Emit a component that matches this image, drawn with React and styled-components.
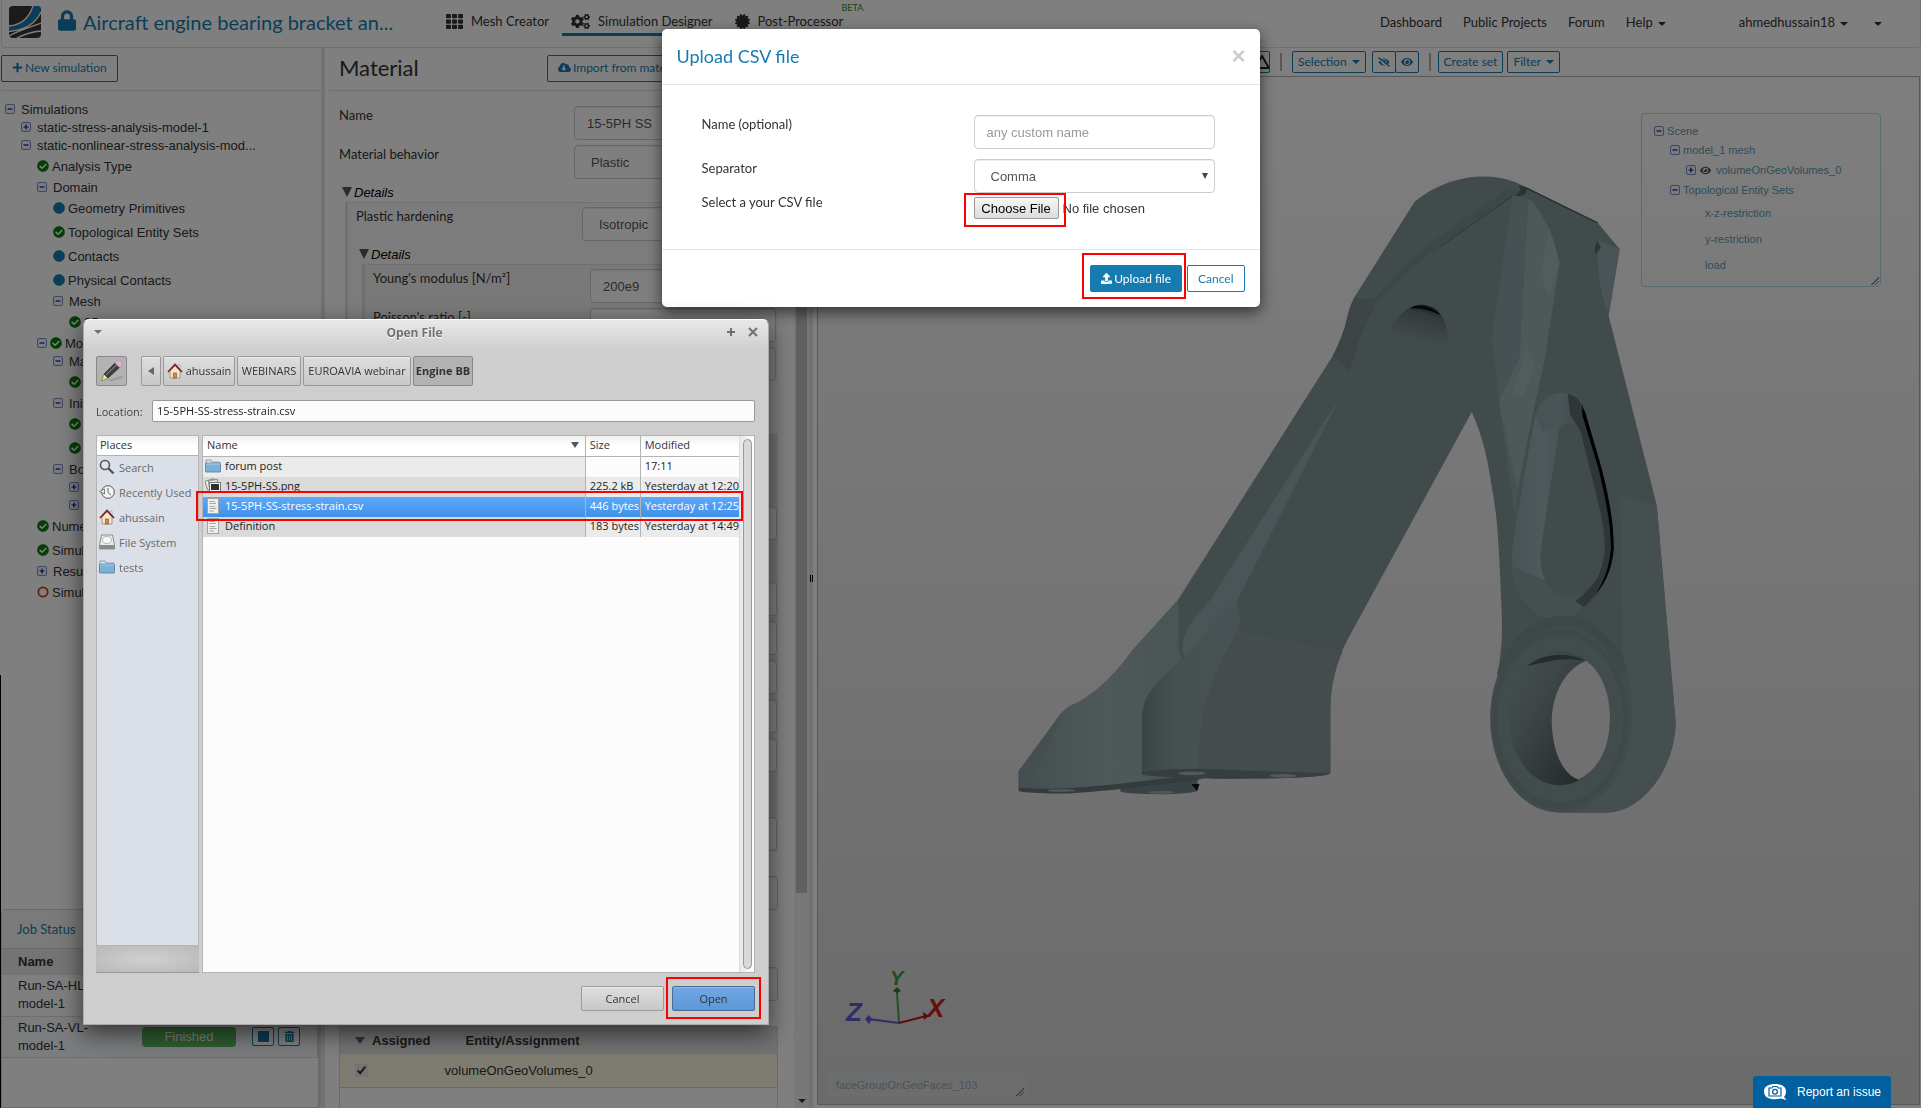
import React, {useState} from "react";
import styled, {createGlobalStyle, css} from "styled-components";
import {
    FaCertificate, FaCheckCircle, FaCircle, FaCloudDownloadAlt, FaCogs,
    FaEye, FaEyeSlash, FaLock, FaPlus, FaTh, FaTrashAlt, FaUpload
} from "react-icons/fa";

const blue = "#167bb0"
const textMain = "#333"
const lato = `Lato, "Open Sans", sans-serif`
const arial = `"Liberation Sans", Arial, sans-serif`
const system = `"Open Sans", "Noto Sans", sans-serif`

const GlobalStyle = createGlobalStyle`
  * { box-sizing: border-box; }
  body { margin: 0; background: #fff; color: ${textMain}; font-family: ${arial}; font-size: 13px; overflow: hidden; }
  button, input, select { font-family: inherit; font-size: inherit; margin: 0; }
  h1, h2, h3 { margin: 0; font-weight: 400; }
`

/* ---------- page ---------- */

const Page = styled.div`
  min-height: 100vh;
  display: flex;
  flex-direction: column;
  padding-left: 1px;
  background: linear-gradient(#fff, #fff) 1px 0 no-repeat, linear-gradient(#fff 675px, #000 675px);
`
const Header = styled.header`
  height: 48px;
  display: flex;
  align-items: flex-start;
  border: 1px solid #e0e0e0;
  border-top: none;
  border-radius: 0 0 4px 4px;
  padding: 0 38px 0 7px;
  font-family: ${lato};
  flex: none;
`
const Brand = styled.a`
  display: flex;
  align-items: center;
  width: 428px;
  padding-top: 4px;
  color: ${blue};
  text-decoration: none;
  font-size: 20px;
  line-height: 36px;
  white-space: nowrap;
`
const LogoSvg = styled.svg`
  width: 32px;
  height: 32px;
  margin-right: 17px;
`
const LockIcon = styled(FaLock)`
  width: 18px;
  height: 21px;
  margin: 0 7px 4px 0;
`
const NavTab = styled.a`
  position: relative;
  height: 36px;
  display: flex;
  align-items: center;
  gap: 8px;
  padding: 9px 9px 0;
  margin-right: 4px;
  color: ${textMain};
  text-decoration: none;
  font-size: 13px;
  white-space: nowrap;
  border-bottom: 3px solid ${p => p.$active ? blue : "transparent"};
`
const Beta = styled.span`
  position: absolute;
  left: 116px;
  top: 2px;
  color: #2e8b2e;
  font-size: 9px;
  line-height: 12px;
`
const UserNav = styled.nav`
  display: flex;
  margin-left: auto;
  gap: 21px;
  line-height: 44px;
  font-size: 13px;
`
const UserLink = styled.a`
  color: ${textMain};
  text-decoration: none;
  margin-left: ${p => p.$gap || 0}px;
`
const Caret = styled.span`
  display: inline-block;
  margin-left: 5px;
  vertical-align: middle;
  border: 4px solid transparent;
  border-top-color: currentColor;
  border-bottom: 0;
`
const Columns = styled.div`
  flex: 1;
  display: flex;
  min-height: 0;
`
const Splitter = styled.div`
  flex: none;
  width: 4px;
  background: #e4e4e4;
  display: flex;
  align-items: center;
  justify-content: center;
  gap: 1px;
`
const Grip = styled.i`
  width: 1px;
  height: 7px;
  background: #000;
`
const OutlineButton = styled.button`
  height: ${p => p.$small ? 22 : 27}px;
  display: flex;
  align-items: center;
  gap: ${p => p.$small ? 0 : 2}px;
  padding: 0 ${p => p.$small ? 5 : 10}px 1px;
  border: 1px solid ${blue};
  border-radius: 2px;
  background: ${p => p.$filled ? blue : "#fff"};
  color: ${p => p.$filled ? "#fff" : blue};
  font-family: ${lato};
  font-size: 12px;
  white-space: nowrap;
`

/* ---------- left column ---------- */

const Sidebar = styled.aside`
  flex: none;
  width: 320px;
  display: flex;
  flex-direction: column;
`
const PanelBar = styled.div`
  height: 43px;
  display: flex;
  align-items: center;
  padding-bottom: 2px;
  border-bottom: 1px solid #e0e0e0;
`
const Tree = styled.ul`
  list-style: none;
  margin: 0;
  padding: 9px 0 0;
  flex: 1;
`
const TreeRow = styled.li`
  height: ${p => p.$leaf ? 24 : 18}px;
  display: flex;
  align-items: center;
  gap: 3px;
  padding-left: ${p => 4 + p.$level * 16}px;
  white-space: nowrap;
`
const Toggle = styled.button`
  width: 10px;
  height: 10px;
  flex: none;
  display: flex;
  margin-right: ${p => p.$tight ? 0 : 3}px;
  padding: 0;
  background: #f4f6fa;
  border: 1px solid #7b8cc0;
  border-radius: 2px;
  color: #1010a0;

  svg { width: 8px; height: 8px; }
`
const StatusIcon = styled.span`
  display: flex;
  width: 12px;
  color: ${p => ({done: "#0b7d0b", open: blue, wait: "#c0451c"})[p.$state]};

  svg { width: 12px; height: 12px; }
`
const Jobs = styled.section`
  height: 199px;
  margin-bottom: 1px;
  border: 1px solid #d4d4d4;
  border-right-width: 3px;
  border-radius: 4px;
`
const JobsTitle = styled.h3`
  height: 39px;
  padding-left: 15px;
  line-height: 38px;
  background: #f5f5f5;
  border-bottom: 1px solid #d4d4d4;
  color: ${blue};
  font-family: ${lato};
  font-size: 13px;
`
const JobsTable = styled.table`
  width: 100%;
  border-collapse: collapse;
  border-right: 1px solid #d4d4d4;
  line-height: 18px;

  th { height: 26px; background: #e8e8e8; text-align: left; padding: 0 0 0 16px; }
  td { height: 41px; padding: 0 0 0 16px; border-bottom: 1px solid #dcdcdc; }
  tr:nth-child(2) td { background: #f6f8fc; }
`
const JobState = styled.span`
  display: block;
  width: 94px;
  line-height: 20px;
  text-align: center;
  border-radius: 4px;
  background: #5cb85c;
  color: #fff;
`
const JobActions = styled.div`
  display: flex;
  gap: 4px;
`
const SquareButton = styled.button`
  width: 22px;
  height: 19px;
  padding: 0;
  display: flex;
  align-items: center;
  justify-content: center;
  background: #fff;
  border: 1px solid ${blue};
  border-radius: 2px;
  color: ${blue};
`

/* ---------- material form ---------- */

const FormPanel = styled.main`
  flex: none;
  width: 484px;
  display: flex;
`
const FormScroll = styled.div`
  flex: 1;
  padding-left: 4px;
`
const FormTitle = styled.h2`
  padding-left: 10px;
  font-family: ${lato};
  font-size: 22px;
  line-height: 24px;
`
const ImportButton = styled(OutlineButton)`
  width: 232px;
  margin: 0 15px 0 auto;
`
const FormBody = styled.div`
  padding: 15px 16px 0 10px;
`
const Field = styled.label`
  display: flex;
  justify-content: space-between;
  height: 34px;
  margin-bottom: ${p => p.$after || 5}px;
  font-family: ${lato};
  line-height: 19px;
`
const boxed = css`
  height: 34px;
  padding: 0 12px;
  border: 1px solid #ccc;
  border-radius: 4px;
  background: #fff;
  color: #555;
  font-family: ${arial};
  font-size: 13px;
  box-shadow: inset 0 1px 1px rgba(0, 0, 0, .07);
`
const TextBox = styled.input`
  ${boxed}
  width: ${p => p.$w}px;

  &::placeholder { color: #999; }
`
const SelectBox = styled.select`
  ${boxed}
  width: ${p => p.$w}px;
  padding: 0 16px;
  appearance: none;
`
const DetailsTitle = styled.div`
  display: flex;
  align-items: center;
  gap: 2px;
  height: 18px;
  padding: 0 0 2px 3px;
  color: #000;
  font-style: italic;

  &::before { content: ""; border: 5px solid transparent; border-top: 10px solid #555; border-bottom: 0; }
`
const DetailsBody = styled.div`
  margin: 0 0 0 6px;
  padding: 4px 1px 0 8px;
  border-left: 3px solid #e0e0e0;
  border-top: 1px solid #e0e0e0;
  background: ${p => p.$shade || "#f9f9f9"};
`
const SectionHead = styled.div`
  height: 67px;
`
const AssignTable = styled.table`
  width: 439px;
  margin-top: 25px;
  border: 1px solid #d4d4d4;
  border-collapse: collapse;
  font-size: 13px;
  white-space: nowrap;

  th { height: 27px; background: #e4e4e4; text-align: left; padding: 0 0 0 15px; }
  th + th { padding-left: 35px; }
  td { height: 34px; background: #fcf8e3; padding: 0 0 0 15px; border-bottom: 1px solid #d4d4d4; }
  td + td { padding-left: 14px; }
  tfoot td { height: 21px; background: #fff; border: 0; }
  input { display: block; margin: 0; width: 13px; height: 13px; accent-color: #e8e8e8; }
`
const SortMark = styled.span`
  display: inline-block;
  margin-right: 7px;
  vertical-align: 1px;
  border: 5px solid transparent;
  border-top: 7px solid #667;
  border-bottom: 0;
`
const ScrollTrack = styled.div`
  flex: none;
  width: 15px;
  padding: 52px 2px 0;
  display: flex;
  flex-direction: column;
  align-items: center;
  justify-content: space-between;
  background: #f1f1f1;

  &::after { content: ""; margin-bottom: 6px; border: 4px solid transparent; border-top-color: #333; border-bottom: 0; }
`
const ScrollThumb = styled.div`
  width: 11px;
  height: 793px;
  background: #c1c1c1;
`

/* ---------- viewer ---------- */

const Viewer = styled.section`
  flex: 1;
  min-width: 0;
  display: flex;
  flex-direction: column;
  padding: 0 1px 4px 4px;
`
const Toolbar = styled.div`
  height: 28px;
  display: flex;
  align-items: center;
  padding: 0 0 0 423px;
`
const ToolGroup = styled.div`
  display: flex;
  margin: 0 ${p => p.$right || 0}px 0 0;

  button + button { margin-left: ${p => p.$joined ? -1 : 4}px; }
`
const Divider = styled.i`
  width: 2px;
  height: 18px;
  margin: 0 ${p => p.$right || 10}px 0 10px;
  background: #b4b0ac;
`
const IconTool = styled(OutlineButton)`
  padding: 0;
  width: ${p => p.$w || 24}px;
  justify-content: center;
`
const Canvas = styled.div`
  position: relative;
  flex: 1;
  overflow: hidden;
  border: 1px solid #b0b0b0;
  background: linear-gradient(#fdfdfd, #d6d6d6);
`
const Model = styled.svg`
  position: absolute;
  left: 162px;
  top: 73px;
  width: 720px;
  height: 680px;
`
const Axes = styled.svg`
  position: absolute;
  left: 22px;
  bottom: 62px;
  width: 120px;
  height: 72px;
  font: italic bold 26px ${arial};
`
const resizeCorner = css`
  &::after {
    content: "";
    position: absolute;
    right: 1px;
    bottom: 1px;
    width: 8px;
    height: 8px;
    background: linear-gradient(135deg, transparent 48%, #777 49%, #777 56%, transparent 57%, transparent 72%, #777 73%, #777 80%, transparent 81%);
  }
`
const ScenePanel = styled.div`
  position: absolute;
  top: 36px;
  right: 38px;
  width: 240px;
  height: 174px;
  padding: 8px 0 0 12px;
  border: 1px solid #b0dbe6;
  border-radius: 4px;
  color: #5a9bb4;
  font-size: 11px;
  ${resizeCorner}
`
const SceneRow = styled.div`
  height: ${p => p.$h || 20}px;
  display: flex;
  align-items: center;
  padding-left: ${p => p.$indent}px;
`
const SceneEye = styled(FaEye)`
  width: 11px;
  height: 11px;
  margin: 0 5px 0 1px;
  color: #555;
`
const FaceHint = styled.div`
  position: absolute;
  left: 10px;
  bottom: 6px;
  width: 198px;
  height: 26px;
  padding-left: 7px;
  line-height: 24px;
  border: 1px solid #d2dcde;
  border-radius: 4px;
  background: rgba(255, 255, 255, .12);
  color: #8fa9b4;
  font-size: 11px;
  ${resizeCorner}
`

/* ---------- upload modal ---------- */

const Backdrop = styled.div`
  position: fixed;
  inset: 0;
  display: flex;
  justify-content: center;
  align-items: flex-start;
  padding-top: 29px;
  background: rgba(0, 0, 0, .5);
`
const Modal = styled.div`
  width: 598px;
  background: #fff;
  border-radius: 5px;
  box-shadow: 0 5px 15px rgba(0, 0, 0, .6);
  font-family: ${lato};
`
const ModalHead = styled.div`
  height: 56px;
  display: flex;
  justify-content: space-between;
  align-items: center;
  padding: 0 14px 2px 15px;
  border-bottom: 1px solid #e5e5e5;
  color: ${blue};
  font-size: 18px;
`
const CloseButton = styled.button`
  padding: 0;
  border: 0;
  background: none;
  color: #ccc;
  font: bold 24px/22px ${arial};
`
const ModalBody = styled.div`
  display: grid;
  grid-template-columns: 272px 241px;
  grid-template-rows: 44px 34px auto;
  padding: 30px 40px;
  line-height: 19px;
`
const SelectWrap = styled.div`
  position: relative;

  &::after {
    content: "";
    position: absolute;
    right: 7px;
    top: 14px;
    border: 3px solid transparent;
    border-top: 6px solid #444;
    border-bottom: 0;
  }
`
const FilePick = styled.div`
  position: relative;
  height: 26px;
  padding-top: 4px;
`
const FileInput = styled.input`
  display: block;
  width: 241px;
  height: 22px;
  font: 13px ${arial};

  &::file-selector-button {
    width: 85px;
    height: 22px;
    margin-right: 4px;
    padding: 0;
    border: 1px solid #999;
    border-radius: 2px;
    background: linear-gradient(#f6f6f6, #dcdcdc);
    font: 13px ${arial};
    color: #000;
  }
`
const ModalFoot = styled.div`
  display: flex;
  justify-content: flex-end;
  gap: 5px;
  padding: 15px;
  border-top: 1px solid #e5e5e5;
`
const Marked = styled.div`
  position: relative;
`
const Mark = styled.i`
  position: absolute;
  inset: ${p => p.$inset};
  border: 2px solid #f00;
  pointer-events: none;
`

/* ---------- open file window ---------- */

const FileWindow = styled.div`
  position: fixed;
  left: 83px;
  top: 319px;
  width: 686px;
  height: 706px;
  display: flex;
  flex-direction: column;
  padding: 0 13px 13px 12px;
  background: linear-gradient(#e8e8e8, #cecece 30px);
  border: 1px solid #aaa;
  border-top-color: #fff;
  border-radius: 6px 6px 0 0;
  box-shadow: 0 8px 24px rgba(0, 0, 0, .6);
  color: #333;
  font-family: ${system};
  font-size: 11px;
`
const TitleBar = styled.div`
  height: 25px;
  display: flex;
  align-items: center;
  justify-content: space-between;
  margin: 0 -3px;
  padding-bottom: 1px;
  color: #707070;
  font-size: 12px;
  font-weight: 700;
  text-shadow: 0 1px #fff;
`
const WindowControls = styled.div`
  display: flex;
`
const WindowButton = styled.button`
  width: ${p => p.$w || 22}px;
  padding: 0;
  border: 0;
  background: none;
  display: flex;
  justify-content: flex-start;
`
const gtk = css`
  border: 1px solid #999;
  border-radius: 2px;
  background: linear-gradient(#dedede, #c8c8c8);
  box-shadow: inset 0 1px #eee;
  color: #333;
  font-size: 11px;
`
const PathBar = styled.div`
  display: flex;
  gap: 2px;
  margin-top: 11px;
`
const PathButton = styled.button`
  ${gtk}
  width: ${p => p.$w}px;
  height: 30px;
  padding: 0 0 1px;
  display: flex;
  align-items: center;
  justify-content: center;
  gap: 3px;
  margin-right: ${p => p.$after || 0}px;
  ${p => p.$pressed && css`
    background: #b2b2b2;
    border-color: #888;
    box-shadow: none;
    font-weight: 700;
  `}
`
const LocationRow = styled.label`
  display: flex;
  align-items: center;
  margin-top: 14px;
  color: #444;

  input {
    flex: 1;
    height: 22px;
    margin-left: auto;
    max-width: 603px;
    padding: 0 4px 2px;
    border: 1px solid #999;
    border-radius: 2px;
    background: #fcfcfc;
    color: #222;
  }
`
const Browser = styled.div`
  flex: 1;
  display: flex;
  gap: 3px;
  margin-top: 13px;
`
const Places = styled.div`
  width: 103px;
  display: flex;
  flex-direction: column;
`
const PlacesList = styled.ul`
  flex: 1;
  margin: 0;
  padding: 0;
  list-style: none;
  border: 1px solid #b4b4b4;
  background: #dadfe8;
`
const PlacesHead = styled.li`
  height: 20px;
  padding-left: 3px;
  line-height: 18px;
  background: linear-gradient(#f0f0f0, #fff 50%);
  border-bottom: 1px solid #b4b4b4;
  color: #333;
`
const Place = styled.li`
  height: 25px;
  display: flex;
  align-items: center;
  gap: 4px;
  padding: 0 0 3px 2px;
  color: #6a6a6a;
  white-space: nowrap;
`
const PlacesFoot = styled.div`
  height: 27px;
  border-bottom: 1px solid #999;
  background: radial-gradient(ellipse at 50% 50%, #d0d0d0, #b8b8b8);
`
const FilesPane = styled.div`
  position: relative;
  flex: 1;
  display: flex;
  border: 1px solid #b4b4b4;
  background: #fcfcfc;
`
const FilesTable = styled.table`
  flex: 1;
  align-self: flex-start;
  table-layout: fixed;
  border-collapse: separate;
  border-spacing: 0;
  line-height: 18px;

  th, td { height: 20px; padding: 0 0 2px 4px; text-align: left; font-weight: 400; white-space: nowrap; }
  th { height: 21px; background: linear-gradient(#f0f0f0, #fff 50%); border-bottom: 1px solid #b4b4b4; }
  th + th, td + td { border-left: 1px solid #b4b4b4; }
  th:first-child div { display: flex; justify-content: space-between; align-items: center; padding-right: 6px; }
`
const FileRow = styled.tr`
  color: ${p => p.$selected ? "#fff" : "#222"};
  td { background: ${p => p.$odd ? "#ebebeb" : "#fcfcfc"}; }
  td:first-child { background: ${p => p.$odd ? "#dadada" : "#ebebeb"}; padding-left: 2px; }
  td:first-child div { display: flex; align-items: center; gap: 4px; }
  ${p => p.$selected && css`
    td, td:first-child { background: linear-gradient(#5ea9fa, #3f90e8); border-color: #3a7cc4; }
  `}
`
const GtkScroll = styled.div`
  width: 15px;
  padding: 3px 3px;
  border-left: 1px solid #ddd;
  background: linear-gradient(90deg, #e8e8e8, #fff);

  i { display: block; width: 9px; height: 100%; border: 1px solid #999; border-radius: 5px; background: #d8d8d8; }
`
const WindowFoot = styled.div`
  display: flex;
  justify-content: flex-end;
  gap: 8px;
  margin-top: 13px;
`
const FootButton = styled.button`
  ${gtk}
  display: block;
  width: 83px;
  height: 25px;
  padding: 0 0 1px;
  ${p => p.$primary && css`
    background: linear-gradient(#72a8e2, #5b97d8);
    border-color: #4a6d94;
    box-shadow: inset 0 1px #8cbcf0;
  `}
`
const ReportButton = styled.button`
  position: fixed;
  right: 30px;
  bottom: 0;
  width: 138px;
  height: 32px;
  padding: 0 0 0 10px;
  display: flex;
  align-items: center;
  gap: 10px;
  border: 0;
  border-radius: 3px 3px 0 0;
  background: #0060a0;
  color: #fff;
  font: 12px ${arial};
  white-space: nowrap;
`

/* ---------- drawings ---------- */

const Logo = () => (
    <LogoSvg viewBox="0 0 32 32">
        <rect width="32" height="32" rx="4" fill="#3a3630" />
        <path d="M24 0H28Q32 0 32 4V5C28 16 16 24 0 24V20C12 18 20 12 24 0Z" fill={blue} />
        <path d="M24 0C20 12 12 19 0 20M32 6C27 17 16 24 0 25.500M32 17C24 20 8 25 0 30M32 25Q20 26 8 32" fill="none" stroke="#fff" strokeWidth="1.300" />
    </LogoSvg>
)

const Ring = () => (
    <svg viewBox="0 0 12 12"><circle cx="6" cy="6" r="4.700" fill="none" stroke="currentColor" strokeWidth="1.800" /></svg>
)

const HomeIcon = ({size = 16}) => (
    <svg width={size} height={size} viewBox="0 0 16 16">
        <rect x="11" y="2" width="2" height="5" fill="#eee" stroke="#888" strokeWidth=".5" />
        <path d="M3 8L8 3L13 8V15H3Z" fill="#f3e4d2" stroke="#8c7a68" strokeWidth=".7" />
        <rect x="6.500" y="10" width="3" height="5" fill="#d98a3c" stroke="#7a4a1c" strokeWidth=".6" />
        <path d="M1 9L8 1.500L15 9" fill="none" stroke="#7c2018" strokeWidth="1.600" />
    </svg>
)

const FolderIcon = () => (
    <svg width="16" height="16" viewBox="0 0 16 16">
        <path d="M1 2H6L7 4H14.500V13H1Z" fill="#dfe6ec" stroke="#7a8894" strokeWidth=".8" />
        <rect x=".5" y="5" width="15" height="9" rx=".5" fill="#7db0d6" stroke="#4c7ea4" strokeWidth=".8" />
        <path d="M1 6H15" stroke="#b8d8ee" strokeWidth=".8" />
    </svg>
)

const PageIcon = () => (
    <svg width="16" height="16" viewBox="0 0 16 16">
        <rect x="2.500" y=".5" width="11" height="15" fill="#f0f0ec" stroke="#a4a4a0" />
        <path d="M4.500 3.500H10M4.500 5.500H11M4.500 8.500H10M4.500 10.500H11.500M4.500 13H9" stroke="#a8a8a8" />
    </svg>
)

const ImageIcon = () => (
    <svg width="16" height="16" viewBox="0 0 16 16">
        <rect x="1" y="2" width="9" height="9" transform="rotate(-18 5 6)" fill="#eee" stroke="#777" strokeWidth=".8" />
        <rect x="4" y="2" width="9" height="10" transform="rotate(-8 8 7)" fill="#ddd" stroke="#777" strokeWidth=".8" />
        <rect x="4.500" y="4.500" width="11" height="10" fill="#f4f4f4" stroke="#777" />
        <rect x="6" y="6" width="8" height="6" fill="#2c3028" />
    </svg>
)

const SearchIcon = () => (
    <svg width="16" height="16" viewBox="0 0 16 16">
        <circle cx="6" cy="6" r="4.500" fill="#dfe4ea" stroke="#555" strokeWidth="1.600" />
        <path d="M9.500 9.500L14.500 14.500" stroke="#555" strokeWidth="2.400" />
    </svg>
)

const RecentIcon = () => (
    <svg width="16" height="16" viewBox="0 0 16 16">
        <circle cx="9" cy="8" r="6.300" fill="#f4f4f4" stroke="#555" />
        <path d="M9 4V8.500L12 11" fill="none" stroke="#666" />
        <path d="M5.500 5V10L.5 7.500Z" fill="#eee" stroke="#666" strokeWidth=".8" />
    </svg>
)

const DiskIcon = () => (
    <svg width="16" height="16" viewBox="0 0 16 16">
        <path d="M2.500 1H13.500L15.500 11V15H.5V11Z" fill="#ececec" stroke="#777" strokeWidth=".8" />
        <ellipse cx="8" cy="6" rx="4.500" ry="3.500" fill="#fafafa" stroke="#aaa" strokeWidth=".8" />
        <rect x="1" y="11" width="14" height="4" fill="#8a8a8a" />
    </svg>
)

const PencilIcon = () => (
    <svg width="24" height="24" viewBox="0 0 24 24">
        <path d="M8 21L21 17L23 19L12 22Z" fill="#8c8c8c" opacity=".6" />
        <path d="M1.500 22L4 15L8 19Z" fill="#f5e58a" stroke="#6b6030" strokeWidth=".6" />
        <path d="M4 15L15 4L19.500 8.500L8 19Z" fill="#3c3f40" stroke="#1c1c1c" strokeWidth=".6" />
        <path d="M6 16L17 5.500" stroke="#777" strokeWidth="1.200" />
        <path d="M15 4L17 2Q19 0 21.500 2.500Q23 4.500 21.500 6.500L19.500 8.500Z" fill="#efa6d0" stroke="#999" strokeWidth=".6" />
    </svg>
)

const Sign = ({open}) => (
    <svg viewBox="0 0 8 8">
        <path d={open ? "M1.500 4H6.500" : "M1.500 4H6.500M4 1.500V6.500"} stroke="currentColor" strokeWidth="1.200" />
    </svg>
)

const Bracket = () => (
    <Model viewBox="0 0 1568 1568" preserveAspectRatio="none">
        <defs>
            <linearGradient id="foot" x1="0" x2="1">
                <stop offset="0" stopColor="#8a9c9f" />
                <stop offset=".5" stopColor="#9fb1b4" />
                <stop offset="1" stopColor="#94a6a9" />
            </linearGradient>
            <linearGradient id="block" x1="0" x2="1">
                <stop offset="0" stopColor="#75878a" />
                <stop offset=".35" stopColor="#8fa1a4" />
                <stop offset="1" stopColor="#92a4a7" />
            </linearGradient>
            <linearGradient id="bore" x1="0" x2="1" y1=".1" y2=".9">
                <stop offset="0" stopColor="#8c9ea1" />
                <stop offset=".3" stopColor="#7c8d90" />
                <stop offset="1" stopColor="#3c4648" />
            </linearGradient>
            <linearGradient id="dent" x1=".7" y1="0" x2=".4" y2="1">
                <stop offset="0" stopColor="#20282a" />
                <stop offset=".2" stopColor="#667477" />
                <stop offset=".7" stopColor="#859799" />
            </linearGradient>
            <linearGradient id="slot" x1="0" x2="1">
                <stop offset="0" stopColor="#92a4a8" />
                <stop offset=".3" stopColor="#a0b2b6" />
                <stop offset=".7" stopColor="#84969a" />
                <stop offset="1" stopColor="#5c6a6c" />
            </linearGradient>
        </defs>
        <path d="M305 1468L474 1440V1478C450 1488 330 1487 306 1480Z" fill="#738588" />
        <path d="M460 1462L478 1462L473 1478Z" fill="#101010" />
        <path d="M432 1036L330 1155C300 1200 260 1245 215 1272C190 1283 180 1290 160 1322L84 1432V1470C120 1480 200 1482 260 1472L476 1448V1036Z" fill="url(#foot)" />
        <path d="M84 1432L180 1300L105 1474L84 1472Z" fill="#8a9ca0" />
        <path d="M84 1470C160 1478 260 1468 440 1444L490 1450C400 1462 240 1484 180 1484C120 1484 84 1480 84 1478Z" fill="#66777a" />
        <path d="M946 120C985 85 1040 60 1100 61C1140 62 1165 72 1190 86L1345 168L1393 228L1369 382L1474 820L1515 1320C1513 1430 1440 1527 1365 1528H1262C1170 1527 1111 1420 1111 1310C1111 1270 1118 1240 1126 1215C1136 1160 1138 1120 1136 1060C1130 900 1127 850 1115 780C1105 700 1090 650 1071 604L800 1130C775 1180 763 1230 763 1290V1438C755 1447 640 1450 530 1450L353 1440V1310C355 1270 370 1240 440 1175L432 1150V1036L768 475C785 445 792 425 800 385Q805 360 815 340Z" fill="#859799" />
        <path d="M783 572L500 1040Q445 1100 442 1135Q440 1150 445 1175L510 1140L555 1050Z" fill="#97a9ac" />
        <path d="M555 1040Q575 1080 558 1115Q480 1270 474 1434H353V1310C355 1260 370 1240 445 1172L525 1070Z" fill="url(#block)" />
        <path d="M560 1110C500 1220 476 1300 474 1434L763 1438V1290C763 1240 775 1190 790 1155Z" fill="#88999c" />
        <path d="M353 1434C420 1424 480 1426 560 1430L763 1437C755 1447 640 1450 530 1450C450 1448 380 1446 353 1440Z" fill="#6c7c7f" />
        <g fill="#a5b5b8">
            <ellipse cx="461" cy="1437" rx="30" ry="4" />
            <ellipse cx="660" cy="1443" rx="30" ry="4" />
            <ellipse cx="178" cy="1477" rx="30" ry="3" />
            <ellipse cx="395" cy="1481" rx="28" ry="3" />
        </g>
        <path d="M800 385Q805 360 815 340L865 345Q840 400 825 440L805 510L768 475Q792 425 800 385Z" fill="#78898c" />
        <path d="M1140 95L1190 86L1190 100Q1180 108 1160 106L1000 225L978 240L870 340L815 420Q850 330 980 215Z" fill="#7b8d90" />
        <path d="M1160 106L1000 225" stroke="#5c6a6c" strokeWidth="2" />
        <path d="M1172 82L1190 86V98Q1182 108 1166 106L1178 92Z" fill="#56646a" />
        <path d="M1190 88L1345 168" stroke="#4e5c5e" strokeWidth="3" />
        <path d="M1345 208L1393 228L1369 382Q1340 300 1345 208Z" fill="#94a6aa" />
        <path d="M1345 208Q1335 225 1341 242L1352 225Z" fill="#5d6b6d" />
        <path d="M1160 106L1200 115Q1240 160 1262 260L1228 490L1200 570L1190 690L1165 840L1130 580L1115 430Z" fill="#8fa1a4" />
        <path d="M1195 112Q1245 170 1262 260L1228 490L1170 780L1130 580L1175 480Z" fill="#9eb0b3" />
        <path d="M1240 180L1262 260L1240 340L1220 290ZM1190 455L1210 500L1180 570L1160 560Z" fill="#a5b7ba" />
        <path d="M895 405C920 370 940 356 965 357C1000 362 1010 385 1018 420L1024 478L905 425Z" fill="url(#dent)" />
        <path d="M940 364Q965 352 1000 378Q965 360 940 364Z" fill="#0a0e0f" stroke="#0a0e0f" strokeWidth="3" />
        <path d="M1395 797L1474 820L1515 1320C1513 1430 1440 1527 1365 1528H1290C1370 1500 1420 1420 1420 1310Q1420 1220 1400 1170Z" fill="#8c9ea1" />
        <path d="M1272 560C1300 562 1310 580 1316 605L1360 760C1375 830 1380 880 1380 920C1375 1010 1310 1082 1258 1082C1200 1080 1157 1020 1158 940C1165 860 1190 720 1210 610C1220 580 1240 560 1272 560Z" fill="url(#slot)" />
        <path d="M1210 612Q1225 570 1250 563L1278 600L1255 640L1225 652Z" fill="#93a5a8" />
        <path d="M1280 562C1300 566 1310 582 1316 605L1360 760C1375 830 1380 880 1380 920C1375 980 1340 1035 1300 1068L1290 1045C1330 1020 1352 975 1360 930C1362 890 1362 880 1350 830L1306 645L1285 610Z" fill="#5f6d72" />
        <path d="M1158 960C1160 1020 1200 1080 1258 1082C1280 1080 1300 1070 1315 1055L1285 1030L1225 990Z" fill="#8c9ea1" />
        <path d="M1262 638Q1290 618 1308 650L1350 830Q1362 890 1360 930C1350 1010 1310 1030 1275 1029C1240 1025 1220 990 1220 930Z" fill="#859799" />
        <path d="M1311 586Q1313 596 1318 604L1354 735C1374 820 1380 870 1380 920C1376 970 1360 1000 1341 1024C1358 995 1370 965 1374 920C1374 870 1366 820 1347 735L1312 612Z" fill="#000" />
        <path d="M1136 1210A145 205 0 0 1 1400 1200" fill="none" stroke="#7b8d90" strokeWidth="22" />
        <ellipse cx="1262" cy="1312" rx="148" ry="208" fill="#7e9093" />
        <ellipse cx="1264" cy="1312" rx="137" ry="192" fill="#869899" />
        <ellipse cx="1262" cy="1310" rx="110" ry="155" fill="url(#bore)" />
        <path d="M1190 1190Q1250 1145 1320 1178Q1290 1172 1255 1176Z" fill="#4c585b" />
        <path d="M1320 1178C1270 1200 1245 1260 1245 1320C1247 1390 1270 1440 1304 1452C1345 1430 1372 1380 1372 1310C1372 1250 1350 1200 1320 1178Z" fill="#e1e1e1" />
    </Model>
)

/* ---------- data ---------- */

const tree = [
    {level: 0, open: true, text: "Simulations"},
    {level: 1, open: false, text: "static-stress-analysis-model-1"},
    {level: 1, open: true, text: "static-nonlinear-stress-analysis-mod..."},
    {level: 2, state: "done", text: "Analysis Type"},
    {level: 2, open: true, text: "Domain"},
    {level: 3, state: "open", text: "Geometry Primitives"},
    {level: 3, state: "done", text: "Topological Entity Sets"},
    {level: 3, state: "open", text: "Contacts"},
    {level: 3, state: "open", text: "Physical Contacts"},
    {level: 3, open: true, text: "Mesh"},
    {level: 4, state: "done", text: "3D"},
    {level: 2, open: true, mark: "done", text: "Model"},
    {level: 3, open: true, text: "Materials"},
    {level: 4, state: "done", text: ""},
    {level: 3, open: true, text: "Initial Conditions"},
    {level: 4, state: "done", text: ""},
    {level: 4, state: "done", text: ""},
    {level: 3, open: true, text: "Boundary"},
    {level: 4, open: false, text: ""},
    {level: 4, open: false, text: ""},
    {level: 2, state: "done", text: "Numerics"},
    {level: 2, state: "done", text: "Simulation"},
    {level: 2, open: false, text: "Results"},
    {level: 2, state: "wait", text: "Simulation"},
]
const stateIcons = {done: <FaCheckCircle />, open: <FaCircle />, wait: <Ring />}

const places = [
    {icon: <SearchIcon />, text: "Search"},
    {icon: <RecentIcon />, text: "Recently Used"},
    {icon: <HomeIcon />, text: "ahussain"},
    {icon: <DiskIcon />, text: "File System"},
    {icon: <FolderIcon />, text: "tests"},
]
const files = [
    {icon: <FolderIcon />, name: "forum post", size: "", date: "17:11"},
    {icon: <ImageIcon />, name: "15-5PH-SS.png", size: "225.2 kB", date: "Yesterday at 12:20"},
    {icon: <PageIcon />, name: "15-5PH-SS-stress-strain.csv", size: "446 bytes", date: "Yesterday at 12:25"},
    {icon: <PageIcon />, name: "Definition", size: "183 bytes", date: "Yesterday at 14:49"},
]

/* ---------- parts ---------- */

function TreeItem({item}) {
    const {level, open, state, mark, text} = item
    return (
        <TreeRow $level={level} $leaf={Boolean(state)}>
            {state
                ? <StatusIcon $state={state}>{stateIcons[state]}</StatusIcon>
                : <Toggle $tight={Boolean(mark)} aria-label="toggle"><Sign open={open} /></Toggle>}
            {mark ? <StatusIcon $state={mark}>{stateIcons[mark]}</StatusIcon> : null}
            <span>{text}</span>
        </TreeRow>
    )
}

function TopBar() {
    return (
        <Header>
            <Brand href="#">
                <Logo />
                <LockIcon />
                Aircraft engine bearing bracket an...
            </Brand>
            <NavTab href="#"><FaTh size={17} />Mesh Creator</NavTab>
            <NavTab href="#" $active><FaCogs size={19} />Simulation Designer</NavTab>
            <NavTab href="#"><FaCertificate size={15} />Post-Processor<Beta>BETA</Beta></NavTab>
            <UserNav>
                <UserLink href="#">Dashboard</UserLink>
                <UserLink href="#">Public Projects</UserLink>
                <UserLink href="#">Forum</UserLink>
                <UserLink href="#">Help<Caret /></UserLink>
                <UserLink href="#" $gap={52}>ahmedhussain18<Caret /></UserLink>
                <UserLink href="#" aria-label="more"><Caret /></UserLink>
            </UserNav>
        </Header>
    )
}

function LeftColumn() {
    return (
        <Sidebar>
            <PanelBar>
                <OutlineButton><FaPlus size={11} />New simulation</OutlineButton>
            </PanelBar>
            <Tree>
                {tree.map((item, i) => <TreeItem key={i} item={item} />)}
            </Tree>
            <Jobs>
                <JobsTitle>Job Status</JobsTitle>
                <JobsTable>
                    <colgroup><col width="124" /><col width="107" /><col /></colgroup>
                    <thead><tr><th>Name</th><th></th><th></th></tr></thead>
                    <tbody>
                        {["Run-SA-HL-", "Run-SA-VL-"].map(name => (
                            <tr key={name}>
                                <td>{name}<br />model-1</td>
                                <td><JobState>Finished</JobState></td>
                                <td>
                                    <JobActions>
                                        <SquareButton aria-label="stop"><svg width="11" height="11"><rect width="11" height="11" fill={blue} /></svg></SquareButton>
                                        <SquareButton aria-label="delete"><FaTrashAlt size={11} /></SquareButton>
                                    </JobActions>
                                </td>
                            </tr>
                        ))}
                    </tbody>
                </JobsTable>
            </Jobs>
        </Sidebar>
    )
}

function MaterialForm() {
    return (
        <FormPanel>
            <FormScroll>
                <PanelBar>
                    <FormTitle>Material</FormTitle>
                    <ImportButton><FaCloudDownloadAlt size={13} />Import from material library</ImportButton>
                </PanelBar>
                <FormBody>
                    <Field>Name<TextBox $w={204} defaultValue="15-5PH SS" /></Field>
                    <Field>Material behavior<SelectBox $w={204}><option>Plastic</option></SelectBox></Field>
                    <DetailsTitle>Details</DetailsTitle>
                    <DetailsBody>
                        <Field>Plastic hardening<SelectBox $w={195}><option>Isotropic</option></SelectBox></Field>
                        <DetailsTitle>Details</DetailsTitle>
                        <DetailsBody $shade="#f3f3f3">
                            <Field>{"Young's modulus [N/m²]"}<TextBox $w={186} defaultValue="200e9" /></Field>
                            <Field>Poisson's ratio [-]<TextBox $w={186} /></Field>
                            <Field $after={53}>Density<TextBox $w={186} /></Field>
                        </DetailsBody>
                    </DetailsBody>
                    <DetailsBody $shade="#e8e8e8">
                        <SectionHead />
                        <Field $after={42}><span /><TextBox $w={186} aria-label="value 1" /></Field>
                        {[2, 3, 4, 5].map(n => (
                            <Field key={n}><span /><TextBox $w={186} aria-label={"value " + n} /></Field>
                        ))}
                        <Field $after={45}><span /><TextBox $w={186} aria-label="value 6" /></Field>
                        <Field $after={25}><span /><SelectBox $w={186} aria-label="type" /></Field>
                    </DetailsBody>
                    <Field $after={57}><span /><TextBox $w={204} aria-label="value 7" /></Field>
                    <Field><span /><SelectBox $w={204} aria-label="selection" /></Field>
                    <AssignTable>
                        <colgroup><col width="90" /><col /></colgroup>
                        <thead><tr><th><SortMark />Assigned</th><th>Entity/Assignment</th></tr></thead>
                        <tbody><tr><td><input type="checkbox" defaultChecked aria-label="assigned" /></td><td>volumeOnGeoVolumes_0</td></tr></tbody>
                        <tfoot><tr><td colSpan="2" /></tr></tfoot>
                    </AssignTable>
                </FormBody>
            </FormScroll>
            <ScrollTrack><ScrollThumb /></ScrollTrack>
        </FormPanel>
    )
}

function Scene() {
    return (
        <ScenePanel>
            <SceneRow $h={18} $indent={0}><Toggle $tight aria-label="toggle"><Sign open /></Toggle>&nbsp;Scene</SceneRow>
            <SceneRow $indent={16}><Toggle $tight aria-label="toggle"><Sign open /></Toggle>&nbsp;model_1 mesh</SceneRow>
            <SceneRow $indent={32}>
                <Toggle aria-label="toggle"><Sign /></Toggle>
                <SceneEye />volumeOnGeoVolumes_0
            </SceneRow>
            <SceneRow $indent={16}><Toggle $tight aria-label="toggle"><Sign open /></Toggle>&nbsp;Topological Entity Sets</SceneRow>
            <SceneRow $h={26} $indent={51}>x-z-restriction</SceneRow>
            <SceneRow $h={26} $indent={51}>y-restriction</SceneRow>
            <SceneRow $h={26} $indent={51}>load</SceneRow>
        </ScenePanel>
    )
}

function ViewerColumn() {
    return (
        <Viewer>
            <Toolbar>
                <IconTool $small $w={30} aria-label="measure">
                    <svg width="30" height="20"><path d="M14 16L21 4L28 16Z" fill="none" stroke="#222" strokeWidth="2" /></svg>
                </IconTool>
                <Divider />
                <ToolGroup $right={6}><OutlineButton $small>Selection<Caret /></OutlineButton></ToolGroup>
                <ToolGroup $joined>
                    <IconTool $small aria-label="hide"><FaEyeSlash size={12} /></IconTool>
                    <IconTool $small aria-label="show"><FaEye size={12} /></IconTool>
                </ToolGroup>
                <Divider $right={7} />
                <ToolGroup>
                    <OutlineButton $small>Create set</OutlineButton>
                    <OutlineButton $small>Filter<Caret /></OutlineButton>
                </ToolGroup>
            </Toolbar>
            <Canvas>
                <Bracket />
                <Scene />
                <Axes viewBox="0 0 120 72">
                    <path d="M59 53L57 22" stroke="#48a048" strokeWidth="2" />
                    <path d="M59 53L28 49" stroke="#5c5cc0" strokeWidth="2" />
                    <path d="M59 53L86 46" stroke="#b01818" strokeWidth="2" />
                    <path d="M53 21L57 17L61 21L57 23Z" fill="#2c7a30" />
                    <path d="M25 49L29 45L32 49L29 54Z" fill="#5c5cd0" />
                    <path d="M83 42L89 46L84 50Z" fill="#b01818" />
                    <text x="6" y="51" fill="#5c5cd0" fontSize="26">Z</text>
                    <text x="50" y="15" fill="#3c9c3c" fontSize="20">Y</text>
                    <text x="87" y="47" fill="#d01818" fontSize="26">X</text>
                </Axes>
                <FaceHint>faceGroupOnGeoFaces_103</FaceHint>
            </Canvas>
        </Viewer>
    )
}

function UploadModal() {
    return (
        <Backdrop>
            <Modal role="dialog">
                <ModalHead>Upload CSV file<CloseButton aria-label="Close">×</CloseButton></ModalHead>
                <ModalBody>
                    <label htmlFor="csv-name">Name (optional)</label>
                    <TextBox id="csv-name" $w={241} placeholder="any custom name" />
                    <label htmlFor="csv-separator">Separator</label>
                    <SelectWrap>
                        <SelectBox id="csv-separator" $w={241}><option>Comma</option></SelectBox>
                    </SelectWrap>
                    <label htmlFor="csv-file">Select a your CSV file</label>
                    <FilePick>
                        <FileInput id="csv-file" type="file" />
                        <Mark $inset="0 149px -8px -10px" />
                    </FilePick>
                </ModalBody>
                <ModalFoot>
                    <Marked>
                        <OutlineButton $filled><FaUpload size={11} />Upload file</OutlineButton>
                        <Mark $inset="-12px -4px -7px -8px" />
                    </Marked>
                    <OutlineButton>Cancel</OutlineButton>
                </ModalFoot>
            </Modal>
        </Backdrop>
    )
}

function OpenFile() {
    const [selected, setSelected] = useState(2)
    return (
        <FileWindow>
            <TitleBar>
                <WindowButton $w={10} aria-label="menu"><svg width="10" height="6"><path d="M1 1H9L5 5Z" fill="#707070" /></svg></WindowButton>
                Open File
                <WindowControls>
                    <WindowButton aria-label="maximize"><svg width="10" height="10"><path d="M1 5H9M5 1V9" stroke="#707070" strokeWidth="2" /></svg></WindowButton>
                    <WindowButton $w={10} aria-label="close"><svg width="10" height="10"><path d="M1 1L9 9M9 1L1 9" stroke="#707070" strokeWidth="2" /></svg></WindowButton>
                </WindowControls>
            </TitleBar>
            <PathBar>
                <PathButton $w={31} $pressed $after={12} aria-label="type a file name"><PencilIcon /></PathButton>
                <PathButton $w={20} aria-label="back"><svg width="6" height="8"><path d="M6 0V8L0 4Z" fill="#666" /></svg></PathButton>
                <PathButton $w={72}><HomeIcon />ahussain</PathButton>
                <PathButton $w={64}>WEBINARS</PathButton>
                <PathButton $w={108}>EUROAVIA webinar</PathButton>
                <PathButton $w={60} $pressed>Engine BB</PathButton>
            </PathBar>
            <LocationRow>Location:<input defaultValue="15-5PH-SS-stress-strain.csv" /></LocationRow>
            <Browser>
                <Places>
                    <PlacesList>
                        <PlacesHead>Places</PlacesHead>
                        {places.map(place => <Place key={place.text}>{place.icon}{place.text}</Place>)}
                    </PlacesList>
                    <PlacesFoot />
                </Places>
                <FilesPane>
                    <FilesTable>
                        <colgroup><col /><col width="55" /><col width="98" /></colgroup>
                        <thead>
                            <tr>
                                <th><div>Name<svg width="8" height="6"><path d="M0 0H8L4 6Z" fill="#555" /></svg></div></th>
                                <th>Size</th>
                                <th>Modified</th>
                            </tr>
                        </thead>
                        <tbody>
                            {files.map((file, i) => (
                                <FileRow key={file.name} $odd={i % 2 === 1} $selected={i === selected} onClick={() => setSelected(i)}>
                                    <td><div>{file.icon}{file.name}</div></td>
                                    <td>{file.size}</td>
                                    <td>{file.date}</td>
                                </FileRow>
                            ))}
                        </tbody>
                    </FilesTable>
                    <GtkScroll><i /></GtkScroll>
                    <Mark $inset="55px 11px 451px -7px" />
                </FilesPane>
            </Browser>
            <WindowFoot>
                <FootButton>Cancel</FootButton>
                <Marked>
                    <FootButton $primary>Open</FootButton>
                    <Mark $inset="-9px -6px -8px -6px" />
                </Marked>
            </WindowFoot>
        </FileWindow>
    )
}

function App() {
    return (
        <>
            <GlobalStyle />
            <Page>
                <TopBar />
                <Columns>
                    <LeftColumn />
                    <Splitter />
                    <MaterialForm />
                    <Splitter><Grip /><Grip /></Splitter>
                    <ViewerColumn />
                </Columns>
            </Page>
            <UploadModal />
            <OpenFile />
            <ReportButton>
                <svg width="24" height="18" viewBox="0 0 24 18">
                    <path d="M12 1C18 1 23 3 23 8.500C23 11 22 13 21 14L23.500 17L18 15.500C10 17.500 1 16 1 8.500C1 3 6 1 12 1Z" fill="#fff" />
                    <path d="M6 5H9L10 3.500H14L15 5H18V13H6Z" fill="none" stroke="#0060a0" strokeWidth="1.200" />
                    <circle cx="12" cy="8.800" r="2.400" fill="none" stroke="#0060a0" strokeWidth="1.300" />
                </svg>
                Report an issue
            </ReportButton>
        </>
    )
}

export default App
